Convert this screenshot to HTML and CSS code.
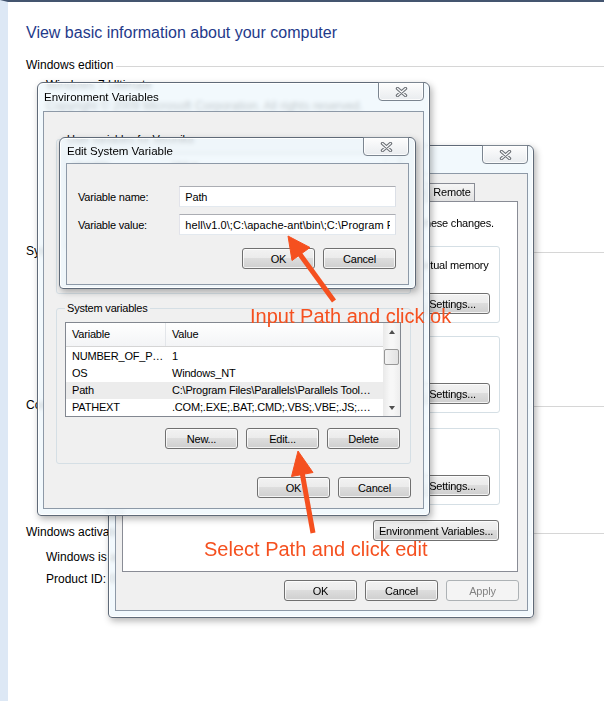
FILE: index.html
```html
<!DOCTYPE html>
<html>
<head>
<title>System - Environment Variables</title>
<link rel="stylesheet" href="styles.css">
</head>
<body>

<div id="desk">

	<!-- start:control panel page -->
	<div id="page">
		<h1>View basic information about your computer</h1>
		<div class="section sec_edition">Windows edition</div>
		<div class="line first">Windows 7 Ultimate</div>
		<div class="line">Copyright &copy; 2009 Microsoft Corporation.  All rights reserved.</div>
		<div class="section sec_system">System</div>
		<div class="section sec_computer">Computer name, domain and workgroup settings</div>
		<div class="section sec_activation">Windows activation</div>
		<div class="line act">Windows is activated</div>
		<div class="line prod">Product ID: 00426-OEM-8992662-00006</div>
	</div>
	<!-- end:control panel page -->

	<!-- start:system properties -->
	<div class="win win_sys">
		<div class="titlebar">
			<span class="title">System Properties</span>
			<div class="close"><svg width="13" height="10" viewBox="0 0 13 10"><path d="M2.5 1.5 L10.5 8.5 M10.5 1.5 L2.5 8.5" stroke="#6b6f75" stroke-width="3.4" stroke-linecap="round"/><path d="M2.5 1.5 L10.5 8.5 M10.5 1.5 L2.5 8.5" stroke="#f6f7f8" stroke-width="1.3" stroke-linecap="round"/></svg></div>
		</div>
		<div class="client sys_client">
			<div class="tabs">
				<span class="tab t_name">Computer Name</span>
				<span class="tab t_hw">Hardware</span>
				<span class="tab t_adv selected">Advanced</span>
				<span class="tab t_prot">System Protection</span>
				<span class="tab t_remote">Remote</span>
			</div>
			<div class="tabpanel">
				<p class="notice">You must be logged on as an Administrator to make most of these changes.</p>
				<fieldset class="group g_first">
					<legend>Performance</legend>
					<p>Visual effects, processor scheduling, memory usage, and virtual memory</p>
					<div class="btnrow gbtn"><button class="btn settings">Settings...</button></div>
				</fieldset>
				<fieldset class="group g_second">
					<legend>User Profiles</legend>
					<p>Desktop settings related to your logon</p>
					<div class="btnrow gbtn"><button class="btn settings">Settings...</button></div>
				</fieldset>
				<fieldset class="group g_third">
					<legend>Startup and Recovery</legend>
					<p>System startup, system failure, and debugging information</p>
					<div class="btnrow gbtn"><button class="btn settings">Settings...</button></div>
				</fieldset>
				<div class="btnrow envrow"><button class="btn envbtn">Environment Variables...</button></div>
			</div>
			<div class="btnrow sysbtns">
				<button class="btn">OK</button>
				<button class="btn">Cancel</button>
				<button class="btn" disabled>Apply</button>
			</div>
		</div>
	</div>
	<!-- end:system properties -->

	<!-- start:environment variables -->
	<div class="win win_env">
		<div class="titlebar">
			<span class="title">Environment Variables</span>
			<div class="close"><svg width="13" height="10" viewBox="0 0 13 10"><path d="M2.5 1.5 L10.5 8.5 M10.5 1.5 L2.5 8.5" stroke="#6b6f75" stroke-width="3.4" stroke-linecap="round"/><path d="M2.5 1.5 L10.5 8.5 M10.5 1.5 L2.5 8.5" stroke="#f6f7f8" stroke-width="1.3" stroke-linecap="round"/></svg></div>
		</div>
		<div class="client env_client">
			<fieldset class="group vargroup">
				<legend>User variables for Veronika</legend>
				<div class="listbox">
					<div class="listmain">
						<div class="lhead"><span class="c1">Variable</span><span class="c2">Value</span></div>
						<div class="lrow"><span class="c1">TEMP</span><span class="c2">%USERPROFILE%\AppData\Local\Temp</span></div>
						<div class="lrow"><span class="c1">TMP</span><span class="c2">%USERPROFILE%\AppData\Local\Temp</span></div>
					</div>
					<div class="scroll"></div>
				</div>
				<div class="btnrow listbtns">
					<button class="btn">New...</button>
					<button class="btn">Edit...</button>
					<button class="btn">Delete</button>
				</div>
			</fieldset>
			<fieldset class="group vargroup sysvars">
				<legend>System variables</legend>
				<div class="listbox">
					<div class="listmain">
						<div class="lhead"><span class="c1">Variable</span><span class="c2">Value</span></div>
						<div class="lbody">
							<div class="lrow"><span class="c1">NUMBER_OF_P&hellip;</span><span class="c2">1</span></div>
							<div class="lrow"><span class="c1">OS</span><span class="c2">Windows_NT</span></div>
							<div class="lrow sel"><span class="c1">Path</span><span class="c2">C:\Program Files\Parallels\Parallels Tool&hellip;</span></div>
							<div class="lrow"><span class="c1">PATHEXT</span><span class="c2">.COM;.EXE;.BAT;.CMD;.VBS;.VBE;.JS;.&hellip;</span></div>
						</div>
					</div>
					<div class="scroll">
						<div class="sb_btn"><i class="tri_up"></i></div>
						<div class="thumb"></div>
						<div class="sb_fill"></div>
						<div class="sb_btn"><i class="tri_down"></i></div>
					</div>
				</div>
				<div class="btnrow listbtns">
					<button class="btn">New...</button>
					<button class="btn">Edit...</button>
					<button class="btn">Delete</button>
				</div>
			</fieldset>
			<div class="btnrow envbtns">
				<button class="btn">OK</button>
				<button class="btn">Cancel</button>
			</div>
		</div>
	</div>
	<!-- end:environment variables -->

	<!-- start:edit system variable -->
	<div class="win win_edit">
		<div class="titlebar">
			<span class="title">Edit System Variable</span>
			<div class="close"><svg width="13" height="10" viewBox="0 0 13 10"><path d="M2.5 1.5 L10.5 8.5 M10.5 1.5 L2.5 8.5" stroke="#6b6f75" stroke-width="3.4" stroke-linecap="round"/><path d="M2.5 1.5 L10.5 8.5 M10.5 1.5 L2.5 8.5" stroke="#f6f7f8" stroke-width="1.3" stroke-linecap="round"/></svg></div>
		</div>
		<div class="client edit_client">
			<div class="field"><label>Variable name:</label><input type="text" value="Path"></div>
			<div class="field"><label>Variable value:</label><input type="text" class="value" value="hell\v1.0\;C:\apache-ant\bin\;C:\Program Files\Java\jdk1.7.0\bin"></div>
			<div class="btnrow editbtns">
				<button class="btn">OK</button>
				<button class="btn">Cancel</button>
			</div>
		</div>
	</div>
	<!-- end:edit system variable -->

	<!-- start:annotations -->
	<svg class="arrows" width="604" height="701" viewBox="0 0 604 701">
		<g fill="#f5501f" stroke="#f5501f" stroke-linejoin="round">
			<line x1="334" y1="301" x2="299" y2="253" stroke-width="5"/>
			<polygon points="288,236 310,247.5 292,260.5" stroke-width="1"/>
			<line x1="313" y1="533" x2="302" y2="472" stroke-width="5"/>
			<polygon points="298,451 313,472.5 291.5,476.5" stroke-width="1"/>
		</g>
	</svg>
	<div class="note note_ok">Input Path and click ok</div>
	<div class="note note_edit">Select Path and click edit</div>
	<!-- end:annotations -->

</div>

</body>
</html>
```

FILE: styles.css
```css
* {box-sizing: border-box;}
body {margin: 0; background: #fff; color: #000; font: 11px/14px "Liberation Sans", Arial, sans-serif; letter-spacing: -.2px;}
p {margin: 0;}
#desk {position: relative; width: 604px; height: 701px; overflow: hidden;}

/* ---------- ---------- ---------- PAGE ---------- ---------- ---------- */
#page {height: 701px; border-top: 2px solid #44556f; border-left: 8px solid #dde8f5; padding-left: 18px; font-size: 12px; letter-spacing: 0;}
#page h1 {margin: 21px 0 0; font-size: 16px; line-height: 20px; font-weight: normal; color: #1f3a8a;}
.section {display: flex; align-items: center; line-height: 16px; white-space: nowrap;}
.section::after {content: ''; flex: 1; margin: 2px 0 0 3px; border-top: 1px solid #d6d6d6;}
.line {padding-left: 20px; line-height: 16px; margin-top: 5px; white-space: nowrap;}
.line.first {margin-top: 4px;}
.sec_edition {margin-top: 14px;}
.sec_system {margin-top: 129px;}
.sec_computer {margin-top: 138px;}
.sec_activation {margin-top: 111px;}
.line.act {margin-top: 9px;}
.line.prod {margin-top: 6px;}

/* ---------- ---------- ---------- WINDOWS ---------- ---------- ---------- */
.win {position: absolute; display: flex; flex-direction: column; border: 1px solid #5f6a78; border-radius: 6px 6px 4px 4px; background: rgba(239, 247, 252, .8); backdrop-filter: blur(2px); box-shadow: inset 0 0 0 1px rgba(255,255,255,.9), 2px 3px 7px rgba(0,0,0,.3);}
.win_sys {left: 108px; top: 145px; width: 426px; height: 473px; padding: 0 5px 6px 6px;}
.win_env {left: 37px; top: 82px; width: 393px; height: 434px; padding: 0 5px 6px;}
.win_edit {left: 59px; top: 137px; width: 357px; height: 152px; padding: 0 6px 3px;}
.titlebar {flex: none; display: flex; align-items: flex-start; height: 27px;}
.win_env .titlebar {height: 28px;}
.win_edit .titlebar {height: 25px;}
.title {padding: 6px 0 0 1px; font-size: 11.5px; line-height: 16px; letter-spacing: 0;}
.win_edit .title {padding-top: 5px;}
.close {margin: -1px 0 0 auto; width: 46px; height: 19px; display: flex; align-items: center; justify-content: center; border: 1px solid #7b8590; border-radius: 0 0 4px 4px; background: linear-gradient(#fdfdfd, #e9ecef); box-shadow: inset 0 0 0 1px rgba(255,255,255,.8);}
.client {flex: 1; display: flex; flex-direction: column; border: 1px solid #8d99a7; background: #f0f0f0;}

/* ---------- ---------- ---------- CONTROLS ---------- ---------- ---------- */
.btnrow {display: flex; justify-content: flex-end; gap: 8px;}
.btn {width: 73px; height: 21px; padding: 0; border: 1px solid #707070; border-radius: 3px; background: linear-gradient(#f2f2f2 0%, #ebebeb 49%, #dddddd 50%, #cfcfcf 100%); box-shadow: inset 0 0 0 1px rgba(255,255,255,.75); color: #000; font: inherit; letter-spacing: inherit;}
.btn:disabled {border-color: #adb2b5; background: #f4f4f4; box-shadow: none; color: #838383;}
.group {margin: 0; border: 1px solid #d5dfe5; border-radius: 3px;}
.group legend {padding: 0 2px; line-height: 14px;}

/* ---------- ---------- ---------- SYSTEM PROPERTIES ---------- ---------- ---------- */
.sys_client {padding: 9px 9px 9px 6px;}
.tabs {display: flex; height: 18px; padding-left: 2px;}
.tab {height: 18px; border: 1px solid #898c95; border-bottom: none; background: linear-gradient(#f6f6f6, #e2e2e2); line-height: 16px; text-align: center; white-space: nowrap; overflow: hidden;}
.tab.selected {background: #fff;}
.t_name {width: 86px;}
.t_hw {width: 62px;}
.t_adv {width: 62px;}
.t_prot {width: 95px;}
.t_remote {width: 46px;}
.tabpanel {flex: 1; padding: 14px 17px 0; border: 1px solid #898c95; background: #fff;}
.notice {white-space: nowrap;}
.tabpanel .group {padding: 5px 9px 8px 8px;}
.tabpanel .group p {white-space: nowrap;}
.g_first {margin-top: 9px;}
.g_second {margin-top: 6px;}
.g_third {margin-top: 8px;}
.gbtn {margin-top: 21px;}
.settings {width: 75px;}
.envrow {margin: 15px 1px 0 0;}
.envbtn {width: 126px;}
.sysbtns {margin: 8px -1px 0 0;}

/* ---------- ---------- ---------- ENVIRONMENT VARIABLES ---------- ---------- ---------- */
.env_client {padding: 20px 12px 0;}
.vargroup {padding: 7px 9px 13px 8px;}
.sysvars {margin-top: 7px; padding-bottom: 14px;}
.listbox {display: flex; height: 95px; border: 1px solid #828790; background: #fff; overflow: hidden;}
.listmain {flex: 1; overflow: hidden;}
.lhead {display: flex; height: 24px; border-bottom: 1px solid #d5d5d5; background: linear-gradient(#fff, #f3f4f6); line-height: 23px;}
.lhead .c1 {border-right: 1px solid #e3e6ea;}
.lbody {padding-top: 1px;}
.lrow {display: flex; height: 17px; line-height: 17px;}
.lrow.sel {background: #ececec;}
.c1 {flex: none; width: 100px; padding-left: 6px; white-space: nowrap; overflow: hidden;}
.c2 {flex: 1; padding-left: 6px; white-space: nowrap; overflow: hidden;}
.scroll {flex: none; width: 17px; display: flex; flex-direction: column; background: linear-gradient(90deg, #e9e9e9, #f7f7f7 40%, #f7f7f7 60%, #ededed);}
.sb_btn {height: 17px; display: flex; align-items: center; justify-content: center;}
.tri_up {border: 3.5px solid transparent; border-top: none; border-bottom: 4px solid #4f4f4f;}
.tri_down {border: 3.5px solid transparent; border-bottom: none; border-top: 4px solid #4f4f4f;}
.thumb {height: 16px; margin: 9px 1px 0; border: 1px solid #979797; border-radius: 2px; background: linear-gradient(90deg, #f3f3f3, #e2e2e2);}
.sb_fill {flex: 1;}
.listbtns {margin: 11px 1px 0 0;}
.envbtns {margin-top: 13px;}

/* ---------- ---------- ---------- EDIT SYSTEM VARIABLE ---------- ---------- ---------- */
.edit_client {padding: 22px 12px 0 11px;}
.field {display: flex; align-items: center; margin-bottom: 7px;}
.field label {width: 102px;}
.field input {width: 218px; height: 21px; padding: 0 5px; border: 1px solid; border-color: #abadb3 #dbdfe6 #e3e9ef #e2e3ea; background: #fff; font: inherit; letter-spacing: inherit; color: #000;}
.field input.value {letter-spacing: .05px;}
.editbtns {margin-top: 6px;}

/* ---------- ---------- ---------- ANNOTATIONS ---------- ---------- ---------- */
.arrows {position: absolute; left: 0; top: 0;}
.note {position: absolute; color: #f5501f; font-size: 20px; line-height: 22px; letter-spacing: 0; white-space: nowrap;}
.note_ok {left: 250px; top: 305px;}
.note_edit {left: 204px; top: 538px;}
```
